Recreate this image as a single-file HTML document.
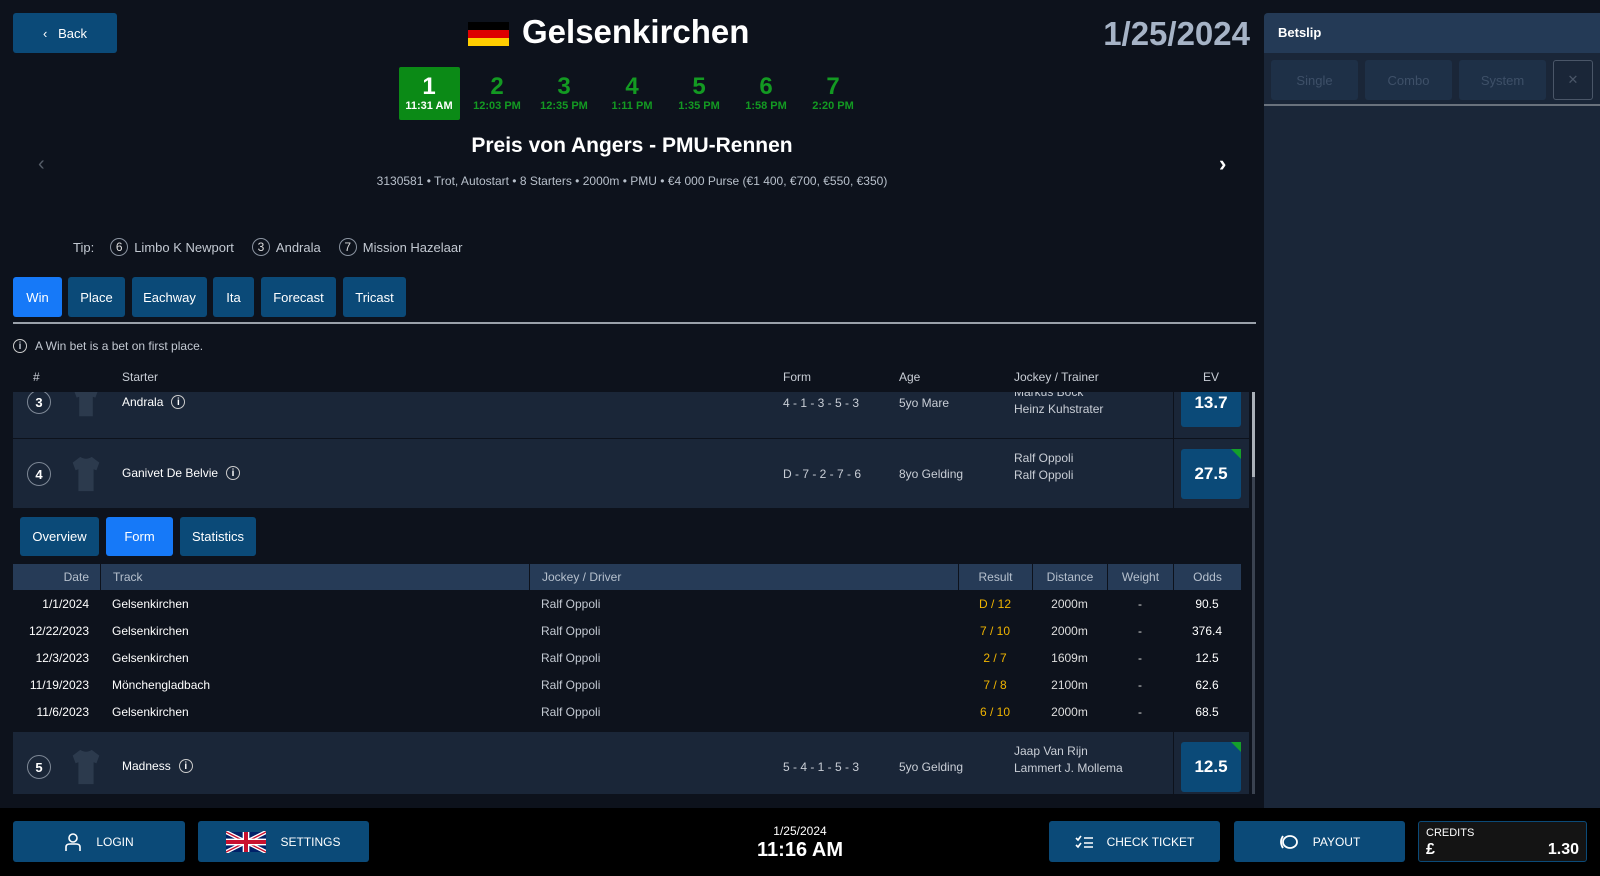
<!DOCTYPE html>
<html><head><meta charset="utf-8"><style>
*{box-sizing:border-box;margin:0;padding:0}
body{width:1600px;height:876px;background:#0d121c;font-family:"Liberation Sans",sans-serif;color:#fff;position:relative;overflow:hidden}
.a{position:absolute}
.btn{position:absolute;background:#0b4a78;border-radius:3px;color:#fff;font-size:13px;display:flex;align-items:center;justify-content:center}
.act{background:#1679f8}
.g{color:#139a22;text-align:center;width:60px;font-weight:bold}
.g b{display:block;font-size:24px;line-height:26px}
.g span{font-size:11px;display:block}
.c{display:inline-flex;width:18px;height:18px;border:1px solid #8a93a0;border-radius:50%;align-items:center;justify-content:center;font-size:12px;color:#ddd;margin:0 6px 0 10px}
.row{position:absolute;left:13px;width:1236px;background:#1a2638}
.num{position:absolute;width:24px;height:24px;border:1px solid #7e8896;border-radius:50%;font-size:13px;font-weight:bold;display:flex;align-items:center;justify-content:center}
.ev{position:absolute;left:1168px;width:60px;background:#0b4a78;border-radius:3px;font-size:17px;font-weight:bold;display:flex;align-items:center;justify-content:center}
.sep{position:absolute;left:1160px;top:0;bottom:0;width:1px;background:#0d121c}
.t{position:absolute;font-size:12px;color:#c9ced6}
.ii{display:inline-flex;width:14px;height:14px;border:1.3px solid #ccc;border-radius:50%;font-size:10px;align-items:center;justify-content:center;margin-left:8px;font-weight:bold}
.fr{position:absolute;font-size:12px;color:#fff}
.th{position:absolute;top:564px;height:26px;background:#263b57;font-size:12px;color:#b6c0cd;display:flex;align-items:center;justify-content:center;border-left:1px solid #0d121c}
.fb{position:absolute;top:821px;height:41px;background:#0b4a78;border-radius:3px;font-size:12px;color:#fff;display:flex;align-items:center;justify-content:center;gap:14px}
</style></head><body>
<div class="btn" style="left:13px;top:13px;width:104px;height:40px">‹&nbsp;&nbsp;&nbsp;Back</div>
<div class="a" style="left:468px;top:22px;width:41px;height:24px"><div style="height:8px;background:#000"></div><div style="height:8px;background:#dd0000"></div><div style="height:8px;background:#ffce00"></div></div>
<div class="a" style="left:522px;top:13px;font-size:33px;font-weight:bold">Gelsenkirchen</div>
<div class="a" style="right:350px;top:15px;font-size:33px;font-weight:bold;color:#a6b3c6">1/25/2024</div>
<div class="a" style="left:399px;top:67px;width:61px;height:53px;background:#0b8a16;border-radius:2px"></div>
<div class="a g" style="left:399px;top:74px;color:#fff"><b>1</b><span>11:31 AM</span></div>
<div class="a g" style="left:467px;top:74px"><b>2</b><span>12:03 PM</span></div>
<div class="a g" style="left:534px;top:74px"><b>3</b><span>12:35 PM</span></div>
<div class="a g" style="left:602px;top:74px"><b>4</b><span>1:11 PM</span></div>
<div class="a g" style="left:669px;top:74px"><b>5</b><span>1:35 PM</span></div>
<div class="a g" style="left:736px;top:74px"><b>6</b><span>1:58 PM</span></div>
<div class="a g" style="left:803px;top:74px"><b>7</b><span>2:20 PM</span></div>
<div class="a" style="left:0;width:1264px;top:134px;text-align:center;font-size:21px;font-weight:bold">Preis von Angers - PMU-Rennen</div>
<div class="a" style="left:0;width:1264px;top:174px;text-align:center;font-size:12px;color:#b8c0cb">3130581 • Trot, Autostart • 8 Starters • 2000m • PMU • €4 000 Purse (€1 400, €700, €550, €350)</div>
<div class="a" style="left:38px;top:153px;font-size:20px;color:#555d68">‹</div>
<div class="a" style="left:1219px;top:151px;font-size:22px;font-weight:bold">›</div>
<div class="a" style="left:73px;top:238px;font-size:13px;color:#c3c9d2;display:flex;align-items:center">Tip:<span class="c" style="margin-left:16px">6</span>Limbo K Newport<span class="c" style="margin-left:18px">3</span>Andrala<span class="c" style="margin-left:18px">7</span>Mission Hazelaar</div>
<div class="btn act" style="left:13px;top:277px;width:49px;height:40px">Win</div>
<div class="btn" style="left:68px;top:277px;width:57px;height:40px">Place</div>
<div class="btn" style="left:132px;top:277px;width:75px;height:40px">Eachway</div>
<div class="btn" style="left:213px;top:277px;width:41px;height:40px">Ita</div>
<div class="btn" style="left:261px;top:277px;width:75px;height:40px">Forecast</div>
<div class="btn" style="left:343px;top:277px;width:63px;height:40px">Tricast</div>
<div class="a" style="left:13px;top:322px;width:1243px;height:2px;background:#9aa1aa"></div>
<div class="a" style="left:13px;top:339px;font-size:12px;color:#c3c9d2;display:flex;align-items:center"><span class="ii" style="margin:0 8px 0 0">i</span>A Win bet is a bet on first place.</div>
<div class="t" style="left:33px;top:370px">#</div>
<div class="t" style="left:122px;top:370px">Starter</div>
<div class="t" style="left:783px;top:370px">Form</div>
<div class="t" style="left:899px;top:370px">Age</div>
<div class="t" style="left:1014px;top:370px">Jockey / Trainer</div>
<div class="t" style="left:1203px;top:370px">EV</div>
<div class="row" style="top:392px;height:46px;overflow:hidden">
<div class="num" style="left:14px;top:-2px">3</div>
<svg class="a" style="left:57px;top:-8px" width="32" height="34" viewBox="0 0 32 40"><path d="M10 2 L2 8 L5 16 L8 15 L8 38 L24 38 L24 15 L27 16 L30 8 L22 2 Q16 6 10 2Z" fill="#2c3a4d"/></svg>
<div class="fr" style="left:109px;top:3px;display:flex;align-items:center">Andrala<span class="ii">i</span></div>
<div class="t" style="left:770px;top:4px">4 - 1 - 3 - 5 - 3</div>
<div class="t" style="left:886px;top:4px">5yo Mare</div>
<div class="t" style="left:1001px;top:-8px;line-height:17px">Markus Bock<br>Heinz Kuhstrater</div>
<div class="sep"></div>
<div class="ev" style="top:-14px;height:49px">13.7</div>
</div>
<div class="row" style="top:439px;height:69px">
<div class="num" style="left:14px;top:23px">4</div>
<svg class="a" style="left:57px;top:16px" width="32" height="38" viewBox="0 0 32 40"><path d="M10 2 L2 8 L5 16 L8 15 L8 38 L24 38 L24 15 L27 16 L30 8 L22 2 Q16 6 10 2Z" fill="#2c3a4d"/></svg>
<div class="fr" style="left:109px;top:27px;display:flex;align-items:center">Ganivet De Belvie<span class="ii">i</span></div>
<div class="t" style="left:770px;top:28px">D - 7 - 2 - 7 - 6</div>
<div class="t" style="left:886px;top:28px">8yo Gelding</div>
<div class="t" style="left:1001px;top:11px;line-height:17px">Ralf Oppoli<br>Ralf Oppoli</div>
<div class="sep"></div>
<div class="ev" style="top:10px;height:50px">27.5<div class="a" style="right:0;top:0;width:0;height:0;border-left:10px solid transparent;border-top:10px solid #14a02a"></div></div>
</div>
<div class="btn" style="left:20px;top:517px;width:79px;height:39px">Overview</div>
<div class="btn act" style="left:106px;top:517px;width:67px;height:39px">Form</div>
<div class="btn" style="left:180px;top:517px;width:76px;height:39px">Statistics</div>
<div class="th" style="left:13px;width:87px;justify-content:flex-end;padding-right:11px;border:0">Date</div>
<div class="th" style="left:100px;width:429px;justify-content:flex-start;padding-left:12px">Track</div>
<div class="th" style="left:529px;width:429px;justify-content:flex-start;padding-left:12px">Jockey / Driver</div>
<div class="th" style="left:958px;width:74px">Result</div>
<div class="th" style="left:1032px;width:75px">Distance</div>
<div class="th" style="left:1107px;width:66px">Weight</div>
<div class="th" style="left:1173px;width:68px">Odds</div>
<div class="a" style="left:0;top:591px;font-size:12px;line-height:27px;width:1241px">
<div style="display:flex"><span style="width:89px;text-align:right">1/1/2024</span><span style="margin-left:23px;width:429px">Gelsenkirchen</span><span style="width:417px;color:#c3c9d2">Ralf Oppoli</span><span style="width:74px;text-align:center;color:#f0b400">D / 12</span><span style="width:75px;text-align:center;color:#ddd">2000m</span><span style="width:66px;text-align:center;color:#ddd">-</span><span style="width:68px;text-align:center">90.5</span></div>
<div style="display:flex"><span style="width:89px;text-align:right">12/22/2023</span><span style="margin-left:23px;width:429px">Gelsenkirchen</span><span style="width:417px;color:#c3c9d2">Ralf Oppoli</span><span style="width:74px;text-align:center;color:#f0b400">7 / 10</span><span style="width:75px;text-align:center;color:#ddd">2000m</span><span style="width:66px;text-align:center;color:#ddd">-</span><span style="width:68px;text-align:center">376.4</span></div>
<div style="display:flex"><span style="width:89px;text-align:right">12/3/2023</span><span style="margin-left:23px;width:429px">Gelsenkirchen</span><span style="width:417px;color:#c3c9d2">Ralf Oppoli</span><span style="width:74px;text-align:center;color:#f0b400">2 / 7</span><span style="width:75px;text-align:center;color:#ddd">1609m</span><span style="width:66px;text-align:center;color:#ddd">-</span><span style="width:68px;text-align:center">12.5</span></div>
<div style="display:flex"><span style="width:89px;text-align:right">11/19/2023</span><span style="margin-left:23px;width:429px">Mönchengladbach</span><span style="width:417px;color:#c3c9d2">Ralf Oppoli</span><span style="width:74px;text-align:center;color:#f0b400">7 / 8</span><span style="width:75px;text-align:center;color:#ddd">2100m</span><span style="width:66px;text-align:center;color:#ddd">-</span><span style="width:68px;text-align:center">62.6</span></div>
<div style="display:flex"><span style="width:89px;text-align:right">11/6/2023</span><span style="margin-left:23px;width:429px">Gelsenkirchen</span><span style="width:417px;color:#c3c9d2">Ralf Oppoli</span><span style="width:74px;text-align:center;color:#f0b400">6 / 10</span><span style="width:75px;text-align:center;color:#ddd">2000m</span><span style="width:66px;text-align:center;color:#ddd">-</span><span style="width:68px;text-align:center">68.5</span></div>
</div>
<div class="row" style="top:732px;height:62px">
<div class="num" style="left:14px;top:23px">5</div>
<svg class="a" style="left:57px;top:16px" width="32" height="38" viewBox="0 0 32 40"><path d="M10 2 L2 8 L5 16 L8 15 L8 38 L24 38 L24 15 L27 16 L30 8 L22 2 Q16 6 10 2Z" fill="#2c3a4d"/></svg>
<div class="fr" style="left:109px;top:27px;display:flex;align-items:center">Madness<span class="ii">i</span></div>
<div class="t" style="left:770px;top:28px">5 - 4 - 1 - 5 - 3</div>
<div class="t" style="left:886px;top:28px">5yo Gelding</div>
<div class="t" style="left:1001px;top:11px;line-height:17px">Jaap Van Rijn<br>Lammert J. Mollema</div>
<div class="sep"></div>
<div class="ev" style="top:10px;height:50px">12.5<div class="a" style="right:0;top:0;width:0;height:0;border-left:10px solid transparent;border-top:10px solid #14a02a"></div></div>
</div>
<div class="a" style="left:1252px;top:392px;width:3px;height:402px;background:#3a4250"></div>
<div class="a" style="left:1252px;top:392px;width:3px;height:85px;background:#aab0b8"></div>
<div class="a" style="left:1264px;top:13px;width:336px;height:795px;background:#1a2638;border-radius:4px 0 0 0"></div>
<div class="a" style="left:1264px;top:13px;width:336px;height:40px;background:#243a56;border-radius:4px 0 0 0;font-size:13px;font-weight:bold;padding:12px 14px">Betslip</div>
<div class="btn" style="left:1271px;top:60px;width:87px;height:40px;background:#1e3047;color:#3e5068">Single</div>
<div class="btn" style="left:1365px;top:60px;width:87px;height:40px;background:#1e3047;color:#3e5068">Combo</div>
<div class="btn" style="left:1459px;top:60px;width:87px;height:40px;background:#1e3047;color:#3e5068">System</div>
<div class="btn" style="left:1553px;top:60px;width:40px;height:40px;background:transparent;border:1px solid #4a5668;color:#4a5668">✕</div>
<div class="a" style="left:1264px;top:104px;width:336px;height:2px;background:#6a727d"></div>
<div class="a" style="left:0;top:808px;width:1600px;height:68px;background:#000"></div>
<div class="fb" style="left:13px;width:172px"><svg width="18" height="20" viewBox="0 0 18 20" fill="none" stroke="#fff" stroke-width="1.6"><circle cx="9" cy="6" r="4"/><path d="M2 19 V15 Q2 12 6 12 H12 Q16 12 16 15 V19"/></svg>LOGIN</div>
<div class="fb" style="left:198px;width:171px"><svg width="40" height="22" viewBox="0 0 60 30"><rect width="60" height="30" fill="#012169"/><path d="M0 0L60 30M60 0L0 30" stroke="#fff" stroke-width="6"/><path d="M0 0L60 30M60 0L0 30" stroke="#C8102E" stroke-width="2"/><path d="M30 0V30M0 15H60" stroke="#fff" stroke-width="10"/><path d="M30 0V30M0 15H60" stroke="#C8102E" stroke-width="6"/></svg>SETTINGS</div>
<div class="a" style="left:700px;width:200px;top:824px;text-align:center;font-size:12px">1/25/2024</div>
<div class="a" style="left:700px;width:200px;top:839px;text-align:center;font-size:20px;font-weight:bold">11:16 AM</div>
<div class="fb" style="left:1049px;width:171px"><svg width="18" height="14" viewBox="0 0 18 14" fill="none" stroke="#fff" stroke-width="1.6"><path d="M1 3l2 2 3-4M1 10l2 2 3-4M9 3h9M9 8h9M9 12h9"/></svg>CHECK TICKET</div>
<div class="fb" style="left:1234px;width:171px"><svg width="20" height="16" viewBox="0 0 20 16" fill="none" stroke="#fff" stroke-width="1.8"><ellipse cx="11" cy="8" rx="7" ry="6"/><path d="M4 2Q0 8 4 14"/></svg>PAYOUT</div>
<div class="a" style="left:1418px;top:821px;width:169px;height:41px;background:#141414;border:1px solid #0b4a78;border-radius:3px">
<div class="a" style="left:7px;top:5px;font-size:11px">CREDITS</div>
<div class="a" style="left:7px;top:19px;font-size:16px;font-weight:bold">£</div>
<div class="a" style="right:7px;top:19px;font-size:16px;font-weight:bold">1.30</div></div>
</body></html>
